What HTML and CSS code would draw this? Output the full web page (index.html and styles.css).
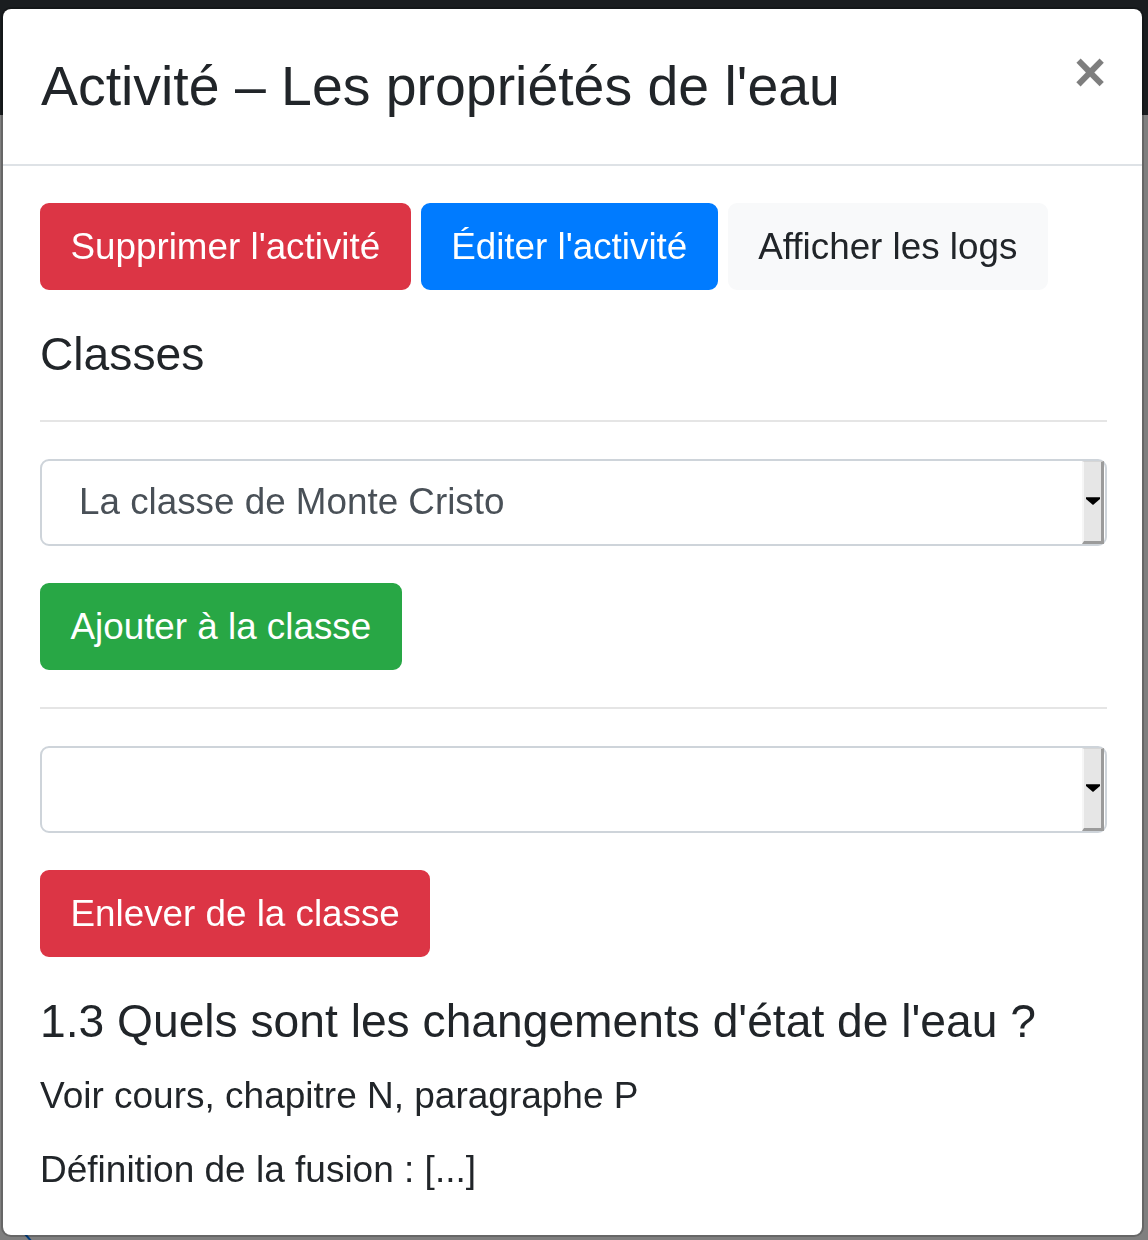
FILE: index.html
```html
<!DOCTYPE html>
<html lang="fr">
<head>
<meta charset="utf-8">
<title>Activité – Les propriétés de l'eau</title>
<link rel="stylesheet" href="styles.css">
</head>
<body>
<div class="page">
  <nav class="navbar"></nav>
  <div class="page-body">
    <svg class="page-mark" width="10" height="10" viewBox="0 0 10 10"><path d="M1 1 L8 9" stroke="#007bff" stroke-width="2" fill="none"/></svg>
  </div>
</div>
<div class="modal-backdrop"></div>
<div class="modal">
  <div class="modal-dialog">
    <div class="modal-content">
      <div class="modal-header">
        <h4 class="modal-title">Activité – Les propriétés de l'eau</h4>
        <button class="close" type="button" aria-label="Close">×</button>
      </div>
      <div class="modal-body">
        <div class="actions">
          <button class="btn btn-danger" type="button">Supprimer l'activité</button>
          <button class="btn btn-primary" type="button">Éditer l'activité</button>
          <button class="btn btn-light" type="button">Afficher les logs</button>
        </div>
        <h5 class="heading">Classes</h5>
        <hr class="sep">
        <div class="select">
          <span class="select-text">La classe de Monte Cristo</span>
          <span class="select-btn"><svg width="16" height="10" viewBox="0 0 16 10"><path d="M0 0 H16 V2 L8 9 L0 2 Z" fill="#000"/></svg></span>
        </div>
        <div class="actions"><button class="btn btn-success" type="button">Ajouter à la classe</button></div>
        <hr class="sep">
        <div class="select">
          <span class="select-text"></span>
          <span class="select-btn"><svg width="16" height="10" viewBox="0 0 16 10"><path d="M0 0 H16 V2 L8 9 L0 2 Z" fill="#000"/></svg></span>
        </div>
        <div class="actions"><button class="btn btn-danger" type="button">Enlever de la classe</button></div>
        <h5 class="heading heading-q">1.3 Quels sont les changements d'état de l'eau ?</h5>
        <p class="text">Voir cours, chapitre N, paragraphe P</p>
        <p class="text">Définition de la fusion : [...]</p>
      </div>
    </div>
  </div>
</div>
</body>
</html>
```
FILE: styles.css
```css
* { box-sizing: border-box; }

html, body {
  margin: 0;
  padding: 0;
}

body {
  font-family: "Liberation Sans", Arial, sans-serif;
  font-size: 37px;
  line-height: 1.5;
  color: #212529;
  background: #fff;
  overflow: hidden;
  height: 1240px;
}

.navbar {
  height: 115px;
  background: #343a40;
}

.page-body {
  padding: 1118px 0 0 24px;
}

.page-mark {
  display: block;
}

.modal-backdrop {
  position: fixed;
  inset: 0;
  background: rgba(0, 0, 0, 0.5);
}

.modal {
  position: fixed;
  inset: 0;
  overflow: hidden;
}

.modal-dialog {
  margin: 7px 0 0 1px;
  width: 1143px;
}

.modal-content {
  background: #fff;
  background-clip: padding-box;
  border: 2px solid rgba(0, 0, 0, 0.2);
  border-radius: 10px;
}

.modal-header {
  display: flex;
  align-items: flex-start;
  padding: 36px 36px 37px 38px;
  border-bottom: 2px solid #dee2e6;
}

.modal-title {
  margin: 0;
  font-size: 55.4px;
  font-weight: 400;
  line-height: 82px;
}

.close {
  margin: -36px -36px -36px auto;
  padding: 36px 36px;
  background: transparent;
  border: 0;
  font-family: "Liberation Sans", Arial, sans-serif;
  font-size: 55px;
  font-weight: 700;
  line-height: 1;
  color: #000;
  opacity: 0.5;
  text-shadow: 0 2px 0 #fff;
  cursor: pointer;
}

.modal-body {
  padding: 37px 35px 38px 37px;
}

.actions {
  display: flex;
  gap: 10px;
  margin-bottom: 37px;
}

.btn {
  display: inline-block;
  font-family: "Liberation Sans", Arial, sans-serif;
  font-size: 36.8px;
  font-weight: 400;
  line-height: 55px;
  padding: 14px 28.5px;
  border: 2px solid transparent;
  border-radius: 9px;
  color: #fff;
  cursor: pointer;
}

.btn-danger { background: #dc3545; border-color: #dc3545; }
.btn-primary { background: #007bff; border-color: #007bff; }
.btn-success { background: #28a745; border-color: #28a745; }
.btn-light { background: #f8f9fa; border-color: #f8f9fa; color: #212529; }

.heading {
  margin: 0 0 18px;
  font-size: 46.2px;
  font-weight: 400;
  line-height: 55px;
}

.sep {
  margin: 37px 0 38px;
  border: 0;
  border-top: 2px solid rgba(0, 0, 0, 0.1);
  height: 0;
}

.heading + .sep {
  margin-top: 38px;
}

.select {
  display: flex;
  height: 86px;
  border: 2px solid #ced4da;
  border-radius: 9px;
  color: #495057;
  background: #fff;
}

.select + .actions {
  margin-top: 37px;
}

.sep + .select {
  margin-top: -1px;
  height: 87px;
}

.select-text {
  flex: 1;
  align-self: center;
  padding-left: 37px;
  line-height: 55px;
  margin-top: -3px;
  font-size: 36.8px;
}

.select-btn {
  width: 22px;
  margin: 0 1px 0 0;
  display: flex;
  align-items: center;
  justify-content: center;
  background: #e6e6e6;
  border-left: 2px solid #f6f6f6;
  border-right: 3px solid #9b9b9b;
  border-bottom: 3px solid #9b9b9b;
  border-top: 1px solid #d6d6d6;
}

.select-btn svg {
  display: block;
  width: 14px;
  height: 9px;
}

.heading-q {
  margin-bottom: 19px;
}

.text {
  margin: 0 0 19px;
  line-height: 55px;
}

.text:last-child {
  margin-bottom: 0;
}
```
